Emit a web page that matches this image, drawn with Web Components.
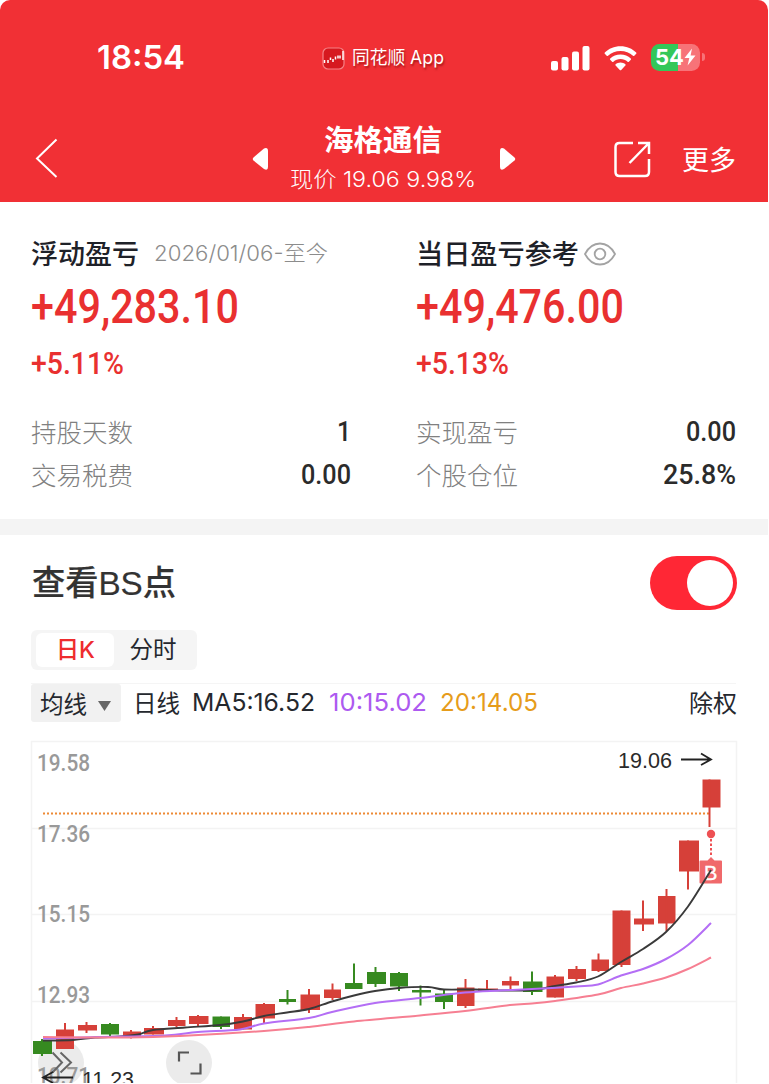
<!DOCTYPE html>
<html lang="zh-CN">
<head>
<meta charset="utf-8">
<title>海格通信</title>
<style>
  body {
    margin: 0;
    background: #fff;
    font-family: "Liberation Sans", "Noto Sans CJK SC", sans-serif;
    color: #222;
  }
</style>
</head>
<body>
<stock-page></stock-page>

<script>
// Text squeezed or stretched horizontally to a given width
class FitText extends HTMLElement {
  connectedCallback() {
    const shadow = this.attachShadow({ mode: 'open' });
    const width = Number(this.getAttribute('width'));
    shadow.innerHTML = `
      <style>
        :host { display: block; flex: none; width: ${width}px; white-space: nowrap; }
        span { display: inline-block; transform-origin: 0 50%; }
      </style>
      <span><slot></slot></span>
    `;
    const span = shadow.querySelector('span');
    const natural = span.getBoundingClientRect().width;
    if (natural) span.style.transform = `scaleX(${width / natural})`;
  }
}

class StatusBar extends HTMLElement {
  connectedCallback() {
    const shadow = this.attachShadow({ mode: 'open' });
    shadow.innerHTML = `
      <style>
        :host {
          display: flex;
          align-items: center;
          height: 116px;
          padding: 0 63px 0 97px;
          color: #fff;
          box-sizing: border-box;
        }
        .time { font: 600 32px/40px Inter, sans-serif; margin-right: 137px; }
        .app { display: flex; align-items: center; gap: 7px; margin-right: 107px; }
        .app fit-text {
          font: 18px/26px Inter, "Noto Sans CJK SC", sans-serif;
          text-shadow: 1px 2px 2px rgba(110, 0, 0, .55);
        }
        .signal { margin-right: 14px; }
        .wifi { margin-right: 14px; }
        svg { display: block; flex: none; }
        .battery {
          display: flex;
          align-items: center;
          gap: 2px;
          margin-top: -2px;
        }
        .level {
          display: flex;
          align-items: center;
          justify-content: center;
          width: 49px;
          height: 27px;
          border-radius: 8.5px;
          background: linear-gradient(90deg, #34c759 27px, #f77378 27px);
          font: 700 22px/27px Inter, sans-serif;
        }
        .cap { width: 3px; height: 8px; border-radius: 0 3px 3px 0; background: #f77378; }
      </style>
      <fit-text class="time" width="88">18:54</fit-text>
      <div class="app">
        <svg width="23" height="23" viewBox="0 0 23 23">
          <rect x="1" y="1" width="21" height="21" rx="5" fill="#d6191f" stroke="#f58286" stroke-width="1.2"/>
          <path d="M2.500 13v3M6 13v3M8.500 10.500v2.500M11 12v3M13.500 9.500v3M16 8.500v3M18 8.500v3M21 4v9" stroke="#fff" stroke-width="1.500"/>
        </svg>
        <fit-text width="92">同花顺 App</fit-text>
      </div>
      <svg class="signal" width="39" height="25" viewBox="0 0 39 25" fill="#fff">
        <rect x="0" y="15" width="7" height="9.500" rx="2"/>
        <rect x="10.500" y="11" width="7" height="13.500" rx="2"/>
        <rect x="21" y="5.500" width="7" height="19" rx="2"/>
        <rect x="31.500" y="0" width="7" height="24.500" rx="2"/>
      </svg>
      <svg class="wifi" width="33" height="25" viewBox="0 0 33 25" fill="#fff">
        <path d="M16.500 .2C22.800 .2 28.300 2.600 32.200 6.500C32.600 6.900 32.600 7.400 32.200 7.800L30.300 9.700C29.900 10 29.400 10 29 9.700C25.700 6.600 21.300 4.900 16.500 4.900S7.300 6.600 4 9.700C3.600 10 3.100 10 2.700 9.700L.8 7.800C.4 7.400 .4 6.900 .8 6.500C4.700 2.600 10.200 .2 16.500 .2Z"/>
        <path d="M16.500 8.500C20.500 8.500 24.100 10 26.800 12.500C27.200 12.900 27.200 13.400 26.800 13.800L24.900 15.700C24.500 16.100 24 16.100 23.600 15.700C21.700 14.100 19.200 13.100 16.500 13.100S11.300 14.100 9.400 15.700C9 16.100 8.500 16.100 8.100 15.700L6.200 13.800C5.800 13.400 5.800 12.900 6.200 12.500C8.900 10 12.500 8.500 16.500 8.500Z"/>
        <path d="M16.500 16.500C18.400 16.500 20.100 17.200 21.400 18.300C21.800 18.700 21.800 19.200 21.400 19.600L17.200 23.900C16.800 24.300 16.200 24.300 15.800 23.900L11.600 19.600C11.200 19.200 11.200 18.700 11.600 18.300C12.900 17.200 14.600 16.500 16.500 16.500Z"/>
      </svg>
      <div class="battery">
        <div class="level">
          <fit-text width="29">54</fit-text>
          <svg width="12" height="18" viewBox="0 0 12 18"><path d="M8 .5L.5 10H5.300L3.600 17.500L11.500 7.500H6.600Z" fill="#fff"/></svg>
        </div>
        <div class="cap"></div>
      </div>
    `;
  }
}

class NavBar extends HTMLElement {
  connectedCallback() {
    const shadow = this.attachShadow({ mode: 'open' });
    shadow.innerHTML = `
      <style>
        :host {
          display: flex;
          align-items: center;
          height: 86px;
          padding: 0 32px 0 35px;
          color: #fff;
          box-sizing: border-box;
        }
        svg { display: block; flex: none; }
        .back { margin: -2px 194px 0 0; }
        .title { display: flex; flex-direction: column; align-items: center; width: 186px; margin: -3px 23px 0 21px; }
        .name { font: 700 29px/43px "Noto Sans CJK SC", sans-serif; }
        .price { font: 300 21.500px/38px Inter, "Noto Sans CJK SC", sans-serif; }
        .share { margin: 0 31px 0 98px; }
        .more { font: 27px/40px "Noto Sans CJK SC", sans-serif; }
      </style>
      <svg class="back" width="23" height="40" viewBox="0 0 23 40"><path d="M21.500 1.500L2 20.500L21.500 39" fill="none" stroke="#fff" stroke-width="2"/></svg>
      <svg width="17" height="24" viewBox="0 0 17 24"><path d="M1.500 10.500L12 1.500Q16 0 16 4V20Q16 24 12 22L1.500 13.500Q0 12 1.500 10.500Z" fill="#fff"/></svg>
      <div class="title">
        <fit-text class="name" width="118"><slot name="name"></slot></fit-text>
        <fit-text class="price" width="186"><slot name="price"></slot></fit-text>
      </div>
      <svg width="17" height="24" viewBox="0 0 17 24"><path d="M15.500 10.500L5 1.500Q1 0 1 4V20Q1 24 5 22L15.500 13.500Q17 12 15.500 10.500Z" fill="#fff"/></svg>
      <svg class="share" width="37" height="37" viewBox="0 0 37 37" fill="none" stroke="#fff" stroke-width="2.500">
        <path d="M19 2H5.500Q1.500 2 1.500 6V31Q1.500 35 5.500 35H31Q35 35 35 31V18"/>
        <path d="M24 2H35V13M35 2L15.500 22"/>
      </svg>
      <fit-text class="more" width="54">更多</fit-text>
    `;
  }
}

// One profit column: heading, amount, percentage and the rows passed in
class ProfitColumn extends HTMLElement {
  connectedCallback() {
    const shadow = this.attachShadow({ mode: 'open' });
    shadow.innerHTML = `
      <style>
        :host { display: block; }
        .head { display: flex; align-items: center; height: 44px; color: #1e2128; font: 500 27px/44px "Noto Sans CJK SC", sans-serif; }
        .amount { font: 500 48.500px/60px Roboto, sans-serif; color: #e93030; margin-top: 2px; }
        .rate { font: 500 32px/44px Roboto, sans-serif; color: #e93030; margin-top: 4px; }
        .rows { margin-top: 24px; }
      </style>
      <div class="head"><slot name="head"></slot></div>
      <fit-text class="amount" width="208">${this.getAttribute('amount')}</fit-text>
      <fit-text class="rate" width="93">${this.getAttribute('rate')}</fit-text>
      <div class="rows"><slot></slot></div>
    `;
  }
}

class StatRow extends HTMLElement {
  connectedCallback() {
    const shadow = this.attachShadow({ mode: 'open' });
    shadow.innerHTML = `
      <style>
        :host { display: flex; justify-content: space-between; height: 43px; }
        .label { font: 300 25.500px/43px "Noto Sans CJK SC", sans-serif; color: #808080; }
        .value { font: 500 28px/45px Roboto, sans-serif; color: #2b2b2b; }
      </style>
      <fit-text class="label" width="102">${this.getAttribute('label')}</fit-text>
      <fit-text class="value" width="${this.getAttribute('fit')}"><slot></slot></fit-text>
    `;
  }
}

class ToggleSwitch extends HTMLElement {
  connectedCallback() {
    const shadow = this.attachShadow({ mode: 'open' });
    shadow.innerHTML = `
      <style>
        :host {
          display: flex;
          justify-content: flex-end;
          align-items: center;
          width: 87px;
          height: 54px;
          padding-right: 4px;
          border-radius: 27px;
          background: #ff2735;
          box-sizing: border-box;
        }
        i { width: 46px; height: 46px; border-radius: 50%; background: #fff; }
      </style>
      <i></i>
    `;
  }
}

class PeriodTabs extends HTMLElement {
  connectedCallback() {
    const shadow = this.attachShadow({ mode: 'open' });
    shadow.innerHTML = `
      <style>
        :host {
          display: flex;
          width: 166px;
          height: 40px;
          padding: 3px 5px;
          border-radius: 6px;
          background: #f5f5f5;
          box-sizing: border-box;
          font: 400 23.500px/34px Inter, "Noto Sans CJK SC", sans-serif;
          color: #25282e;
        }
        div { display: flex; justify-content: center; width: 78px; height: 34px; border-radius: 6px; }
        .on { background: #fff; color: #ee2c2e; font-weight: 500; }
      </style>
      <div class="on"><fit-text width="39">日K</fit-text></div>
      <div><fit-text width="47">分时</fit-text></div>
    `;
  }
}

class MaLegend extends HTMLElement {
  connectedCallback() {
    const shadow = this.attachShadow({ mode: 'open' });
    shadow.innerHTML = `
      <style>
        :host {
          display: flex;
          height: 39px;
          border-top: 1px solid #f5f5f5;
          box-sizing: border-box;
          font: 23.500px/36px "Noto Sans CJK SC", sans-serif;
          color: #25282e;
        }
        .pick {
          display: flex;
          align-items: center;
          gap: 11px;
          width: 90px;
          height: 38px;
          padding-left: 9px;
          margin-right: 12px;
          border-radius: 3px;
          background: #f1f1f1;
          box-sizing: border-box;
        }
        .pick svg { margin-top: 5px; }
        .ma { font: 24px/38px Inter, sans-serif; }
        .ma5 { margin: 0 14px 0 12px; }
        .ma10 { color: #ad5af0; margin-right: 13px; }
        .ma20 { color: #e69c1b; }
        .right { margin-left: auto; margin-right: -1px; }
      </style>
      <div class="pick">
        <fit-text width="47">均线</fit-text>
        <svg width="13" height="10" viewBox="0 0 13 10"><path d="M0 0H13L6.500 10Z" fill="#666"/></svg>
      </div>
      <fit-text width="47">日线</fit-text>
      <fit-text class="ma ma5" width="123">MA5:16.52</fit-text>
      <fit-text class="ma ma10" width="98">10:15.02</fit-text>
      <fit-text class="ma ma20" width="98">20:14.05</fit-text>
      <fit-text class="right" width="48">除权</fit-text>
    `;
  }
}

const RED = '#d64039';
const GREEN = '#368a20';

// [left, right, body top, body bottom, high, low, wick x, colour]
const candles = [
  [33, 52, 1041, 1054, 1039, 1056, 42, GREEN],
  [56, 74, 1029.5, 1049, 1023, 1049, 65, RED],
  [78, 97, 1025, 1030.5, 1022, 1033, 86.5, RED],
  [101, 119, 1024, 1034.5, 1023, 1036, 110, GREEN],
  [123, 141, 1031.5, 1036, 1030, 1038.5, 131, RED],
  [144, 164, 1028, 1034.5, 1026, 1034.5, 153, RED],
  [168, 185.5, 1020, 1026, 1017, 1027, 176.5, RED],
  [189, 208.5, 1016, 1024, 1015, 1027, 198, RED],
  [212.5, 230, 1016.5, 1027, 1016.5, 1029, 221, GREEN],
  [234, 252, 1017, 1029.5, 1014, 1029.5, 243, RED],
  [255.5, 275, 1004, 1018.5, 1003, 1023, 264, RED],
  [279, 296, 999, 1002, 990, 1004.5, 287.5, GREEN],
  [300.5, 320, 994.5, 1010, 989, 1013, 309, RED],
  [324, 341, 989.5, 998, 983.5, 1000, 332.5, RED],
  [345, 362.5, 983, 989, 963.5, 989, 354, GREEN],
  [367, 386, 972, 984, 967, 987, 375.5, GREEN],
  [390, 408, 973, 986.5, 972, 991, 399, GREEN],
  [412, 431, 990, 992.5, 985.5, 1005.5, 420.5, GREEN],
  [435, 453, 993.5, 1002, 989, 1009, 444, GREEN],
  [457, 474.5, 987.5, 1006, 979, 1008, 465.5, RED],
  [478, 498, 988.5, 991, 980, 992, 487, RED],
  [502, 519, 981, 985.5, 976.5, 989, 510.5, RED],
  [523, 542.5, 981.5, 992, 971.5, 995, 532, GREEN],
  [546.5, 564, 976.5, 997.5, 975, 997.5, 555, RED],
  [568, 586, 969, 979, 966, 981, 576.5, RED],
  [591.5, 609, 959.5, 971, 953.5, 972, 598.5, RED],
  [612.5, 630.5, 910.5, 965, 910.5, 967, 621.5, RED],
  [634, 654, 918.5, 924.5, 900.5, 931, 643, RED],
  [658, 675.5, 896, 923.5, 889, 931, 666.5, RED],
  [679, 699, 840.5, 871.5, 840.5, 889.5, 688, RED],
  [702.5, 720.5, 779.5, 807.5, 779.5, 827, 709.5, RED]
];

const ma5 = [[43, 1040.5], [73, 1040], [95, 1037.5], [120, 1036.5], [138, 1034.5], [153, 1030], [185, 1027.5], [220, 1025], [243, 1021.5], [264, 1016], [287, 1012.5], [309, 1009], [332, 1001.5], [354, 995.5], [375, 991], [399, 988], [428, 987], [444, 989.5], [475, 989.5], [500, 990.5], [532, 990], [555, 986], [576, 982.5], [598, 976.5], [621, 962], [643, 949], [666, 932], [688, 906.5], [711, 870]];
const ma10 = [[43, 1038.5], [100, 1037], [165, 1035.5], [198, 1032], [240, 1029.500], [264, 1023.5], [309, 1018], [332, 1012], [375, 1003], [420, 998], [465, 992.5], [500, 990.5], [532, 989], [576, 986.5], [598, 984.5], [621, 975.5], [643, 969], [666, 959], [688, 945], [711, 923]];
const ma20 = [[43, 1037], [130, 1037.5], [180, 1036], [264, 1031], [309, 1027], [354, 1021.5], [420, 1015.5], [465, 1011], [510, 1005], [532, 1003.5], [555, 1001], [598, 994.5], [621, 988], [643, 983.5], [666, 977.5], [688, 969], [711, 957.5]];

// Smooth path through all the points
function curve(points) {
  let d = `M${points[0]}`;
  for (let i = 0; i < points.length - 1; i++) {
    const [x0, y0] = points[i - 1] || points[i];
    const [x1, y1] = points[i];
    const [x2, y2] = points[i + 1];
    const [x3, y3] = points[i + 2] || points[i + 1];
    d += `C${x1 + (x2 - x0) / 6},${y1 + (y2 - y0) / 6} ${x2 - (x3 - x1) / 6},${y2 - (y3 - y1) / 6} ${x2},${y2}`;
  }
  return d;
}

class KlineChart extends HTMLElement {
  connectedCallback() {
    const shadow = this.attachShadow({ mode: 'open' });

    const bars = candles.map(([l, r, top, bottom, high, low, x, color]) =>
      `<path d="M${l} ${top}H${r}V${bottom}H${l}Z" fill="${color}"/><path d="M${x} ${high}V${low}" stroke="${color}" stroke-width="2"/>`
    ).join('');

    const labels = [['19.58', 771], ['17.36', 841.5], ['15.15', 921.5], ['12.93', 1003], ['10.71', 1084]].map(([t, y]) =>
      `<text x="37" y="${y}" textLength="53" lengthAdjust="spacingAndGlyphs">${t}</text>`
    ).join('');

    shadow.innerHTML = `
      <style>
        :host { display: block; }
        svg { display: block; }
        .axis { font: 500 24px Roboto, sans-serif; fill: #999; }
        .mark { font: 22.500px "Liberation Sans", sans-serif; fill: #2a2a2a; }
      </style>
      <svg width="768" height="345" viewBox="0 738 768 345" fill="none">
        <path d="M31.500 1083V741.500H736.500V1083M31.500 828.500H736.500M31.500 914.500H736.500M31.500 1001.500H736.500" stroke="#f3f3f3" stroke-width="1.500"/>
        <circle cx="61" cy="1063" r="23" fill="#ebebeb"/>
        <circle cx="189" cy="1063" r="23" fill="#ebebeb"/>
        <g class="axis">${labels}</g>
        <path d="M43 813.500H709" stroke="#ee8a35" stroke-width="2" stroke-dasharray="2 2"/>
        ${bars}
        <circle cx="711" cy="834" r="4.200" fill="#ee5053"/>
        <path d="M711 839V855" stroke="#ee5053" stroke-width="2" stroke-dasharray="2.500 2"/>
        <path d="M700.500 860.500H707.500L711 857L714.500 860.500H721Q722 860.500 722 861.500V882.500Q722 883.500 721 883.500H700.500Q699.500 883.500 699.500 882.500V861.500Q699.500 860.500 700.500 860.500Z" fill="#f0696b"/>
        <text x="704" y="879.500" font-size="20" fill="#fff" stroke="#fff" stroke-width=".4" font-family="Liberation Sans, sans-serif">B</text>
        <path d="${curve(ma5)}" stroke="#3a3a3a" stroke-width="1.900"/>
        <path d="${curve(ma10)}" stroke="#b46ef5" stroke-width="2"/>
        <path d="${curve(ma20)}" stroke="#f67f92" stroke-width="2"/>
        <text class="mark" x="618" y="768" textLength="54" lengthAdjust="spacingAndGlyphs">19.06</text>
        <path d="M681 759.500H710M701 753.500L711 759.500L701 765" stroke="#222" stroke-width="1.800"/>
        <path d="M52.500 1052.500L62 1062.500L52.500 1072.500M60.500 1052.500L71 1062.500L60.500 1072.500" stroke="#666" stroke-width="2"/>
        <path d="M73 1077.500H43M53 1072L43 1077.500L53 1083" stroke="#222" stroke-width="1.800"/>
        <text class="mark" x="82" y="1086.500" textLength="52" lengthAdjust="spacingAndGlyphs">11.23</text>
        <path d="M189 1052.500H179V1061.500M190.500 1073.500H200.500V1063.500" stroke="#555" stroke-width="2.200"/>
      </svg>
    `;
  }
}

class StockPage extends HTMLElement {
  connectedCallback() {
    const shadow = this.attachShadow({ mode: 'open' });
    shadow.innerHTML = `
      <style>
        :host { display: block; width: 768px; height: 1083px; overflow: hidden; }
        header { height: 202px; background: #f13035; border-radius: 10px 10px 0 0; }
        .profit { display: flex; gap: 65px; height: 317px; padding: 29px 32px 0 31px; box-sizing: border-box; }
        profit-column { flex: 1; }
        .range { font: 300 21.500px/44px Inter, "Noto Sans CJK SC", sans-serif; color: #8c8c8c; margin-left: 15px; }
        .eye { margin: 2px 0 0 5px; }
        .divider { height: 16px; background: #f4f4f4; }
        .bs { display: flex; justify-content: space-between; align-items: center; height: 95px; padding: 0 32px; }
        .bs fit-text { font: 500 34px/50px "Liberation Sans", "Noto Sans CJK SC", sans-serif; color: #333; -webkit-text-stroke: .2px #333; }
        toggle-switch { margin-right: -1px; }
        .tools { padding: 0 32px 0 31px; }
        ma-legend { margin: 13px 0 16px; }
      </style>
      <header>
        <status-bar></status-bar>
        <nav-bar>
          <span slot="name">海格通信</span>
          <span slot="price">现价 19.06 9.98%</span>
        </nav-bar>
      </header>
      <section class="profit">
        <profit-column amount="+49,283.10" rate="+5.11%">
          <fit-text slot="head" width="108">浮动盈亏</fit-text>
          <fit-text slot="head" class="range" width="174">2026/01/06-至今</fit-text>
          <stat-row label="持股天数" fit="14">1</stat-row>
          <stat-row label="交易税费" fit="50">0.00</stat-row>
        </profit-column>
        <profit-column amount="+49,476.00" rate="+5.13%">
          <fit-text slot="head" width="163">当日盈亏参考</fit-text>
          <svg slot="head" class="eye" width="32" height="24" viewBox="0 0 32 24" fill="none" stroke="#a3a3a3" stroke-width="1.800">
            <path d="M1 12C5 4.500 10 1.500 16 1.500S27 4.500 31 12C27 19.500 22 22.500 16 22.500S5 19.500 1 12Z"/>
            <circle cx="16" cy="12" r="5.300"/>
          </svg>
          <stat-row label="实现盈亏" fit="50">0.00</stat-row>
          <stat-row label="个股仓位" fit="73">25.8%</stat-row>
        </profit-column>
      </section>
      <div class="divider"></div>
      <section class="bs">
        <fit-text width="144">查看BS点</fit-text>
        <toggle-switch></toggle-switch>
      </section>
      <section class="tools">
        <period-tabs></period-tabs>
        <ma-legend></ma-legend>
      </section>
      <kline-chart></kline-chart>
    `;
  }
}

customElements.define('fit-text', FitText);
customElements.define('status-bar', StatusBar);
customElements.define('nav-bar', NavBar);
customElements.define('profit-column', ProfitColumn);
customElements.define('stat-row', StatRow);
customElements.define('toggle-switch', ToggleSwitch);
customElements.define('period-tabs', PeriodTabs);
customElements.define('ma-legend', MaLegend);
customElements.define('kline-chart', KlineChart);
customElements.define('stock-page', StockPage);
</script>
</body>
</html>
